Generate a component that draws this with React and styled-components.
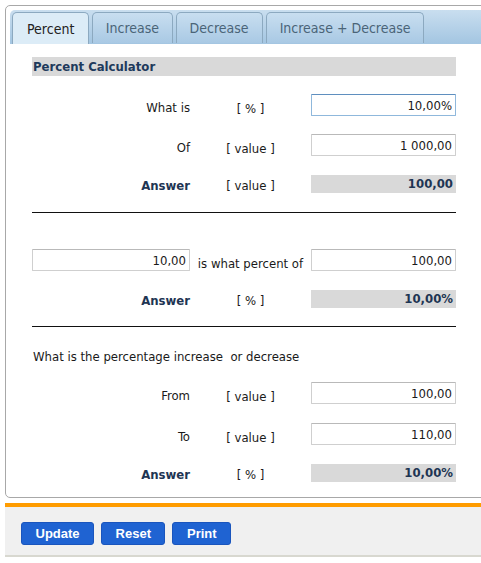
import React from 'react';
import styled, { createGlobalStyle } from 'styled-components';

const GlobalStyle = createGlobalStyle`
  html, body {
    margin: 0;
    padding: 0;
    background: #fff;
    overflow: hidden;
  }
  body {
    font-family: "DejaVu Sans Condensed", "DejaVu Sans", Verdana, sans-serif;
    font-size: 13px;
    color: #1a1a1a;
  }
`

const Page = styled.div`
  width: 520px;
  padding: 5px 0 0 5px;
`

const Panel = styled.div`
  border: 1px solid #a8a8a8;
  border-radius: 5px;
  padding: 4px 4px 15px 4px;
  background: #fff;
`

const TabBar = styled.div`
  display: flex;
  align-items: flex-end;
  gap: 3px;
  height: 34px;
  padding: 0 2px;
  box-sizing: border-box;
  border-radius: 5px 5px 0 0;
  background: linear-gradient(#c9deef, #a4c6e2);
  border-bottom: 1px solid #a4c6e2;
`

const Tab = styled.div`
  box-sizing: border-box;
  padding: 0 ${p => p.$pad || 13}px;
  display: flex;
  align-items: center;
  font-size: 14px;
  border: 1px solid #8ca9c0;
  border-bottom: none;
  border-radius: 5px 5px 0 0;
  color: ${p => (p.$active ? '#222' : '#4a6478')};
  background: ${p => (p.$active ? '#dcecf7' : 'linear-gradient(#c8def0, #a9c9e4)')};
  margin-bottom: ${p => (p.$active ? '-1px' : '0')};
  height: ${p => (p.$active ? '32px' : '31px')};
`

const Content = styled.div`
  width: 424px;
  margin: 13px 0 0 22px;
`

const Title = styled.div`
  height: 19px;
  line-height: 19px;
  padding-left: 1px;
  background: #d9d9d9;
  font-weight: bold;
  font-size: 13px;
  color: #1e3a5c;
`

const Row = styled.div`
  display: grid;
  grid-template-columns: 158px 121px 145px;
  align-items: end;
  height: ${p => p.$h || 22}px;
  margin-top: ${p => p.$gap || 0}px;
`

const Label = styled.div`
  text-align: right;
  line-height: 15px;
  padding-bottom: ${p => (p.$bold ? 0 : 1)}px;
  font-weight: ${p => (p.$bold ? 'bold' : 'normal')};
  color: ${p => (p.$bold ? '#1e3553' : '#1a1a1a')};
`

const Unit = styled.div`
  text-align: center;
  line-height: 15px;
`

const Field = styled.input`
  width: 100%;
  height: 22px;
  box-sizing: border-box;
  border: 1px solid ${p => (p.$focus ? '#8fb8dc' : '#cfcfcf')};
  border-top-color: ${p => (p.$focus ? '#5f8fbf' : '#b9b9b9')};
  border-radius: 1px;
  padding: 0 3px;
  text-align: right;
  font: inherit;
  color: #1a1a1a;
  outline: none;
  background: #fff;
`

const Result = styled.div`
  height: 18px;
  line-height: 18px;
  background: #d9d9d9;
  text-align: right;
  padding-right: 3px;
  font-weight: bold;
  font-size: 13px;
  color: #1e3553;
`

const Divider = styled.hr`
  border: none;
  border-top: 1px solid #111;
  margin: ${p => p.$gap}px 0 0 0;
  height: 0;
`

const Note = styled.div`
  margin-top: 22px;
  padding-left: 1px;
  line-height: 15px;
  white-space: pre;
`

const Footer = styled.div`
  margin-top: 5px;
  border-top: 4px solid #ff9c00;
  border-bottom: 2px solid #d8d8d0;
  background: #f0f0f0;
  height: 54px;
  padding: 15px 0 0 16px;
  box-sizing: border-box;
  display: flex;
  align-items: flex-start;
  gap: 7px;
`

const Button = styled.button`
  height: 23px;
  padding: 0 13.5px;
  border: 1px solid #1a55bd;
  border-radius: 3px;
  background: #1f63d2;
  color: #fff;
  font-family: "Liberation Sans", Arial, sans-serif;
  font-weight: bold;
  font-size: 13px;
  cursor: pointer;
`

export default function App() {
  return (
    <>
      <GlobalStyle />
      <Page>
        <Panel>
          <TabBar>
            <Tab $active $pad={14}>Percent</Tab>
            <Tab $pad={12.5}>Increase</Tab>
            <Tab>Decrease</Tab>
            <Tab>Increase + Decrease</Tab>
          </TabBar>
          <Content>
            <Title>Percent Calculator</Title>

            <Row $gap={18}>
              <Label>What is</Label>
              <Unit>[ % ]</Unit>
              <Field $focus defaultValue="10,00%" />
            </Row>
            <Row $gap={18}>
              <Label>Of</Label>
              <Unit>[ value ]</Unit>
              <Field defaultValue="1 000,00" />
            </Row>
            <Row $gap={19} $h={18}>
              <Label $bold>Answer</Label>
              <Unit>[ value ]</Unit>
              <Result>100,00</Result>
            </Row>

            <Divider $gap={19} />

            <Row $gap={36}>
              <Field defaultValue="10,00" />
              <Unit>is what percent of</Unit>
              <Field defaultValue="100,00" />
            </Row>
            <Row $gap={19} $h={18}>
              <Label $bold>Answer</Label>
              <Unit>[ % ]</Unit>
              <Result>10,00%</Result>
            </Row>

            <Divider $gap={18} />

            <Note>What is the percentage increase  or decrease</Note>

            <Row $gap={18}>
              <Label>From</Label>
              <Unit>[ value ]</Unit>
              <Field defaultValue="100,00" />
            </Row>
            <Row $gap={19}>
              <Label>To</Label>
              <Unit>[ value ]</Unit>
              <Field defaultValue="110,00" />
            </Row>
            <Row $gap={19} $h={18}>
              <Label $bold>Answer</Label>
              <Unit>[ % ]</Unit>
              <Result>10,00%</Result>
            </Row>
          </Content>
        </Panel>
        <Footer>
          <Button>Update</Button>
          <Button>Reset</Button>
          <Button>Print</Button>
        </Footer>
      </Page>
    </>
  );
}
